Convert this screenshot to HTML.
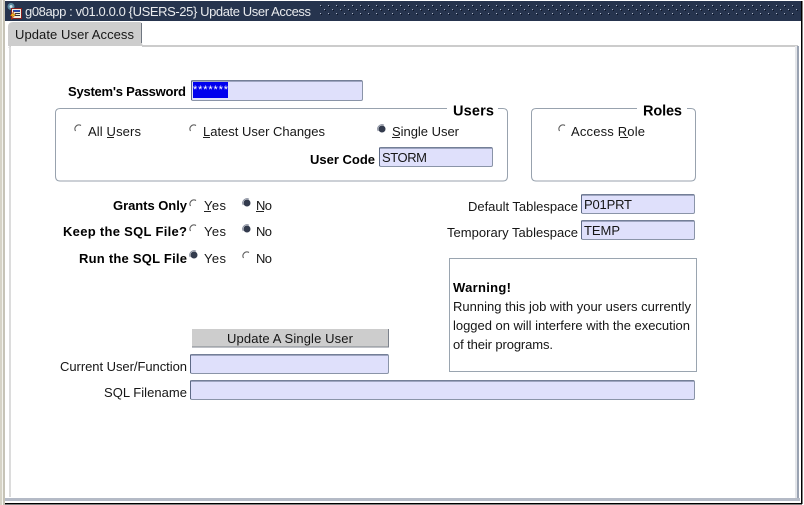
<!DOCTYPE html>
<html><head><meta charset="utf-8"><style>
html,body{margin:0;padding:0;background:#fff;width:804px;height:505px;overflow:hidden}
svg{display:block}
text{font-family:"Liberation Sans",sans-serif;font-size:13px;fill:#161616}
.b{font-weight:bold;fill:#000}
.h{font-weight:bold;font-size:14.5px;fill:#000}
</style></head><body>
<svg width="804" height="505" viewBox="0 0 804 505" xmlns="http://www.w3.org/2000/svg">
<defs>
<pattern id="d" x="320" y="5" width="8" height="8" patternUnits="userSpaceOnUse">
<rect x="0" y="0" width="1" height="1" fill="#aab2c4"/><rect x="1" y="1" width="1" height="1" fill="#0c1424"/>
<rect x="4" y="4" width="1" height="1" fill="#aab2c4"/><rect x="5" y="5" width="1" height="1" fill="#0c1424"/>
</pattern>
<g id="ro"><path d="M-3.5 2 A4 4 0 0 1 2 -3.5" fill="none" stroke="#555" stroke-width="1.1"/></g>
<g id="rf"><circle r="3.500" fill="#333b4d"/><path d="M-3.800 2 A4.300 4.300 0 0 1 2 -3.800" fill="none" stroke="#8a90a0" stroke-width="1"/></g>
</defs>
<rect width="804" height="505" fill="#fff"/>
<!-- outer frame -->
<rect x="0" y="0" width="2" height="505" fill="#d6d3c6"/>
<rect x="2" y="0" width="1" height="505" fill="#f2f2ec"/>
<rect x="3" y="0" width="2" height="505" fill="#c6c3b6"/>
<rect x="5" y="498" width="795" height="3" fill="#b4bac6"/>
<rect x="5" y="503" width="797" height="1.5" fill="#000"/>
<rect x="801" y="1" width="1.5" height="503" fill="#000"/>
<!-- title -->
<rect x="5" y="1" width="796" height="20" fill="#26344e"/>
<rect x="320" y="5" width="480" height="12" fill="url(#d)"/>
<g>
<circle cx="11" cy="6.500" r="3.500" fill="#5a8aa0"/><circle cx="11" cy="6.500" r="1.500" fill="#cfe3ea"/>
<rect x="11.500" y="8.500" width="10" height="10" fill="#f3efe0" stroke="#8a1f1f" stroke-width="1"/>
<rect x="13" y="10" width="7" height="2" fill="#2b4aa8"/>
<rect x="15" y="13" width="5" height="1" fill="#333"/><rect x="15" y="15" width="5" height="1" fill="#333"/>
<path d="M14 11 L10 16 L13 16 L11 20 L16 14 L13 14 Z" fill="#f0c020" stroke="#a03010" stroke-width=".5"/>
</g>
<text x="25" y="16" textLength="286" lengthAdjust="spacing" style="fill:#e9ebee">g08app : v01.0.0.0 {USERS-25} Update User Access</text>
<!-- tab -->
<path d="M8 46 V27 Q8 22 13 22 H140 Q142 22 142 25 V43 Q142 45 144 46 Z" fill="#cdcdcd"/>
<path d="M141.500 23 V43" stroke="#6f7680" stroke-width="1" fill="none"/>
<text x="15" y="39" textLength="119" lengthAdjust="spacing">Update User Access</text>
<!-- panel -->
<path d="M9 48 Q9 46.500 11 46.500" fill="none" stroke="#ccc" stroke-width="1"/>
<rect x="142" y="45" width="656" height="2" fill="#cccccc"/>
<rect x="9" y="47" width="2" height="450" fill="#dcdcdc"/>
<rect x="797" y="46" width="2" height="452" fill="#9aa3b2"/>
<rect x="795" y="46" width="2" height="452" fill="#e4e6ea"/>
<!-- password -->
<text class="b" x="68" y="96" textLength="118" lengthAdjust="spacing">System's Password</text>
<rect x="191.500" y="80.500" width="171" height="20" rx="1.500" fill="#dfe0fb" stroke="#8a94a8"/>
<path d="M191.500 100 V81 H362" fill="none" stroke="#5e6a86" stroke-width="1"/>
<rect x="193" y="82" width="35" height="16" fill="#0000ee"/>
<text x="193" y="93" textLength="35" lengthAdjust="spacing" style="fill:#fff;font-size:11px">*******</text>
<!-- groups -->
<path d="M447 108.500 H60 Q55.500 108.500 55.500 113 V176 Q55.500 181 60 181 H503 Q507.500 181 507.500 176 V113 Q507.500 108.500 503 108.500 H498" fill="none" stroke="#98a2ae"/>
<text class="h" x="453" y="115.500" textLength="41" lengthAdjust="spacing">Users</text>
<path d="M637 108.500 H536 Q531.500 108.500 531.500 113 V176 Q531.500 181 536 181 H691 Q695.500 181 695.500 176 V113 Q695.500 108.500 691 108.500 H687" fill="none" stroke="#98a2ae"/>
<text class="h" x="643" y="115.500" textLength="39" lengthAdjust="spacing">Roles</text>
<use href="#ro" x="79" y="129"/><text x="88" y="136" textLength="53" lengthAdjust="spacing">All Users</text>
<rect x="107" y="137" width="7" height="1" fill="#222"/>
<use href="#ro" x="194" y="129"/><text x="203" y="136" textLength="122" lengthAdjust="spacing">Latest User Changes</text>
<rect x="203" y="137" width="7" height="1" fill="#222"/>
<use href="#rf" x="382" y="129"/><text x="392" y="136" textLength="67" lengthAdjust="spacing">Single User</text>
<rect x="392" y="137" width="8" height="1" fill="#222"/>
<use href="#ro" x="563" y="129"/><text x="571" y="136" textLength="74" lengthAdjust="spacing">Access Role</text>
<rect x="620" y="137" width="8" height="1" fill="#222"/>
<text class="b" x="310" y="164" textLength="65" lengthAdjust="spacing">User Code</text>
<rect x="379.500" y="147.500" width="113" height="19" rx="1.500" fill="#dfe0fb" stroke="#8a94a8"/>
<path d="M379.500 166 V148 H492" fill="none" stroke="#5e6a86"/>
<text x="382" y="162" textLength="45" lengthAdjust="spacing">STORM</text>
<!-- options -->
<text class="b" x="113" y="210" textLength="74" lengthAdjust="spacing">Grants Only</text>
<use href="#ro" x="194" y="204"/><text x="204" y="210" textLength="22" lengthAdjust="spacing">Yes</text>
<rect x="204" y="211" width="7" height="1" fill="#222"/>
<use href="#rf" x="247" y="203"/><text x="256" y="210" textLength="16" lengthAdjust="spacing">No</text>
<rect x="256" y="211" width="8" height="1" fill="#222"/>
<text class="b" x="63" y="236" textLength="124" lengthAdjust="spacing">Keep the SQL File?</text>
<use href="#ro" x="194" y="229"/><text x="204" y="236" textLength="22" lengthAdjust="spacing">Yes</text>
<use href="#rf" x="247" y="229"/><text x="256" y="236" textLength="16" lengthAdjust="spacing">No</text>
<text class="b" x="79" y="263" textLength="108" lengthAdjust="spacing">Run the SQL File</text>
<use href="#rf" x="194" y="255"/><text x="204" y="263" textLength="22" lengthAdjust="spacing">Yes</text>
<use href="#ro" x="247" y="256"/><text x="256" y="263" textLength="16" lengthAdjust="spacing">No</text>
<!-- tablespace -->
<text x="468" y="211" textLength="110" lengthAdjust="spacing">Default Tablespace</text>
<rect x="581.500" y="194.500" width="113" height="19" rx="1.500" fill="#dfe0fb" stroke="#8a94a8"/>
<path d="M581.500 213 V195 H694" fill="none" stroke="#5e6a86"/>
<text x="584" y="209" textLength="48" lengthAdjust="spacing">P01PRT</text>
<text x="447" y="237" textLength="131" lengthAdjust="spacing">Temporary Tablespace</text>
<rect x="581.500" y="220.500" width="113" height="19" rx="1.500" fill="#dfe0fb" stroke="#8a94a8"/>
<path d="M581.500 239 V221 H694" fill="none" stroke="#5e6a86"/>
<text x="584" y="235" textLength="36" lengthAdjust="spacing">TEMP</text>
<!-- warning -->
<rect x="449.500" y="258.500" width="247" height="113" fill="#fff" stroke="#9aa5b0"/>
<text class="b" x="453" y="292" textLength="58" lengthAdjust="spacing">Warning!</text>
<text x="453" y="311" textLength="238" lengthAdjust="spacing">Running this job with your users currently</text>
<text x="453" y="330" textLength="237" lengthAdjust="spacing">logged on will interfere with the execution</text>
<text x="453" y="349" textLength="100" lengthAdjust="spacing">of their programs.</text>
<!-- button -->
<rect x="192" y="329" width="197" height="18" fill="#cdcdcd"/>
<path d="M388.500 329 V347 H192" fill="none" stroke="#7c828c"/>
<text x="227" y="343" textLength="126" lengthAdjust="spacing">Update A Single User</text>
<!-- bottom fields -->
<text x="60" y="371" textLength="127" lengthAdjust="spacing">Current User/Function</text>
<rect x="190.500" y="354.500" width="198" height="19" rx="1.500" fill="#dfe0fb" stroke="#8a94a8"/>
<path d="M190.500 373 V355 H388" fill="none" stroke="#5e6a86"/>
<text x="104" y="397" textLength="83" lengthAdjust="spacing">SQL Filename</text>
<rect x="190.500" y="380.500" width="504" height="19" rx="1.500" fill="#dfe0fb" stroke="#8a94a8"/>
<path d="M190.500 399 V381 H694" fill="none" stroke="#5e6a86"/>
</svg>
</body></html>
